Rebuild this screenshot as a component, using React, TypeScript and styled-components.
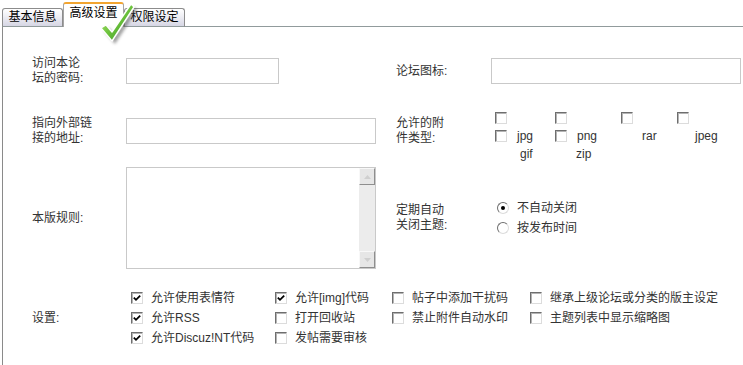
import styled, { createGlobalStyle } from "styled-components";

const GlobalStyle = createGlobalStyle`
  html, body {
    margin: 0;
    padding: 0;
    background: #fff;
    overflow: hidden;
  }
  body {
    font-family: "Liberation Sans", "Noto Sans CJK SC", sans-serif;
    font-size: 12px;
    color: #333;
  }
`;

const Page = styled.div`
  position: relative;
  width: 743px;
  height: 365px;
`;

const TabBar = styled.div`
  position: relative;
  z-index: 1;
  display: flex;
  align-items: flex-end;
  height: 27px;
  margin-bottom: -1px;
  padding-left: 2px;
`;

const Tab = styled.div<{ $active?: boolean }>`
  box-sizing: border-box;
  width: 61px;
  height: ${(p) => (p.$active ? 25 : 19)}px;
  border: 1px solid ${(p) => (p.$active ? "#a5a5a5" : "#8c8c8c")};
  border-top: ${(p) => (p.$active ? "2px solid #f2a531" : "1px solid #8c8c8c")};
  border-bottom: ${(p) => (p.$active ? "none" : "1px solid #919b9c")};
  border-radius: 3px 3px 0 0;
  background: ${(p) =>
    p.$active ? "#fff" : "linear-gradient(#ffffff 0%, #f0f0f5 40%, #d6d6e4 100%)"};
  color: #000;
  font-size: 12px;
  line-height: ${(p) => (p.$active ? 18 : 17)}px;
  text-align: center;
  white-space: nowrap;
`;

const TickMark = styled.svg`
  position: absolute;
  left: 96px;
  top: 0;
  z-index: 2;
`;

const Panel = styled.div`
  margin-left: 2px;
  height: 338px;
  border-top: 1px solid #919b9c;
  border-left: 1px solid #8a8a8a;
`;

const Form = styled.div`
  display: flex;
  flex-direction: column;
  padding: 20px 0 0 29px;
`;

const Row = styled.div<{ $h: number; $mt?: number }>`
  display: grid;
  grid-template-columns: 94px 270px 95px 1fr;
  align-items: center;
  height: ${(p) => p.$h}px;
  margin-top: ${(p) => p.$mt ?? 0}px;
`;

const Label = styled.div`
  line-height: 15px;
  color: #333;
`;

const TextInput = styled.input<{ $w: number }>`
  box-sizing: border-box;
  width: ${(p) => p.$w}px;
  height: 26px;
  margin: 0;
  border: 1px solid #c9c9c9;
  background: #fff;
  outline: none;
`;

const TypeGroup = styled.div`
  align-self: start;
  margin-top: 10px;
  padding-left: 4px;
  display: grid;
  grid-template-columns: 60px 66px 56px 1fr;
`;

const TypeCol = styled.div`
  display: flex;
  flex-direction: column;
`;

const TypeLine = styled.div`
  display: flex;
  align-items: center;
  height: 18px;
  line-height: 18px;
`;

const TypeName = styled.span<{ $indent?: number }>`
  margin-left: ${(p) => p.$indent ?? 0}px;
  color: #333;
`;

const Box = styled.span`
  box-sizing: border-box;
  flex: none;
  display: inline-flex;
  align-items: center;
  justify-content: center;
  width: 12px;
  height: 12px;
  border: 1px solid;
  border-color: #6e6e6e #dcdcdc #dcdcdc #6e6e6e;
  box-shadow: inset 1px 1px 0 #b4b4b4;
  background: #fff;
`;

const RadioDot = styled.span`
  box-sizing: border-box;
  flex: none;
  display: inline-flex;
  align-items: center;
  justify-content: center;
  width: 12px;
  height: 12px;
  border-radius: 50%;
  border: 1px solid;
  border-color: #6e6e6e #dcdcdc #dcdcdc #6e6e6e;
  background: #fff;

  &::after {
    content: "";
    display: ${(p: { $on?: boolean }) => (p.$on ? "block" : "none")};
    width: 4px;
    height: 4px;
    border-radius: 50%;
    background: #000;
  }
`;

const AreaBox = styled.div`
  box-sizing: border-box;
  display: flex;
  width: 250px;
  height: 102px;
  border: 1px solid #c9c9c9;
  background: #fff;
`;

const Area = styled.textarea`
  flex: 1;
  border: none;
  resize: none;
  outline: none;
  margin: 0;
  padding: 2px;
  overflow: hidden;
  background: #fff;
`;

const ScrollBar = styled.div`
  display: flex;
  flex-direction: column;
  width: 16px;
  background: #ececec;
`;

const ScrollBtn = styled.div`
  box-sizing: border-box;
  display: flex;
  align-items: center;
  justify-content: center;
  height: 17px;
  border: 1px solid;
  border-color: #f8f8f8 #8e8e8e #8e8e8e #f8f8f8;
  background: #e6e6e6;
`;

const ScrollTrack = styled.div`
  flex: 1;
`;

const RadioGroup = styled.div`
  display: flex;
  flex-direction: column;
  padding-left: 6px;
`;

const OptionLine = styled.label`
  display: flex;
  align-items: center;
  gap: 8px;
  height: 20px;
  line-height: 20px;
  color: #333;
  white-space: nowrap;
`;

const SettingsRow = styled.div`
  display: grid;
  grid-template-columns: 94px 1fr;
  align-items: center;
  height: 60px;
  margin-top: 19px;
`;

const SettingsGrid = styled.div`
  display: grid;
  grid-template-columns: 144px 117px 138px 1fr;
  grid-auto-rows: 20px;
  padding-left: 5px;
`;

function Check({ on }: { on?: boolean }) {
  return (
    <Box>
      {on && (
        <svg width="8" height="8" viewBox="0 0 8 8">
          <polyline
            points="0.8,3.6 3,5.8 7.2,1.6"
            fill="none"
            stroke="#000"
            strokeWidth="1.8"
          />
        </svg>
      )}
    </Box>
  );
}

function Arrow({ up }: { up?: boolean }) {
  return (
    <svg width="7" height="4" viewBox="0 0 7 4">
      <polygon
        points={up ? "3.5,0 7,4 0,4" : "0,0 7,0 3.5,4"}
        fill="#cfcfcf"
      />
    </svg>
  );
}

const settings: [string, boolean][] = [
  ["允许使用表情符", true],
  ["允许[img]代码", true],
  ["帖子中添加干扰码", false],
  ["继承上级论坛或分类的版主设定", false],
  ["允许RSS", true],
  ["打开回收站", false],
  ["禁止附件自动水印", false],
  ["主题列表中显示缩略图", false],
  ["允许Discuz!NT代码", true],
  ["发帖需要审核", false],
];

export default function App() {
  return (
    <Page>
      <GlobalStyle />
      <TabBar>
        <Tab>基本信息</Tab>
        <Tab $active>高级设置</Tab>
        <Tab>权限设定</Tab>
      </TabBar>
      <TickMark width="46" height="46" viewBox="0 0 46 46">
        <defs>
          <linearGradient id="tickFill" x1="0" y1="0" x2="1" y2="1">
            <stop offset="0" stopColor="#c8f08a" />
            <stop offset="0.5" stopColor="#6cc23c" />
            <stop offset="1" stopColor="#2f8a22" />
          </linearGradient>
          <filter id="tickShadow" x="-30%" y="-30%" width="160%" height="160%">
            <feGaussianBlur stdDeviation="1.6" />
          </filter>
        </defs>
        <polygon
          points="8,31 13,28 19,35 38,7 41,10 19,44"
          fill="#555"
          opacity="0.55"
          filter="url(#tickShadow)"
        />
        <polygon
          points="5,28 10,25 16,32 35,4 38,7 16,41"
          fill="url(#tickFill)"
          stroke="#fff"
          strokeWidth="1.4"
          strokeLinejoin="round"
        />
      </TickMark>
      <Panel>
        <Form>
          <Row $h={48}>
            <Label>
              访问本论
              <br />
              坛的密码:
            </Label>
            <TextInput $w={153} type="password" />
            <Label>论坛图标:</Label>
            <TextInput $w={250} type="text" />
          </Row>
          <Row $h={56} $mt={4}>
            <Label>
              指向外部链
              <br />
              接的地址:
            </Label>
            <TextInput $w={250} type="text" />
            <Label>
              允许的附
              <br />
              件类型:
            </Label>
            <TypeGroup>
              <TypeCol>
                <TypeLine>
                  <Check />
                </TypeLine>
                <TypeLine>
                  <Check />
                  <TypeName $indent={10}>jpg</TypeName>
                </TypeLine>
                <TypeLine>
                  <TypeName $indent={25}>gif</TypeName>
                </TypeLine>
              </TypeCol>
              <TypeCol>
                <TypeLine>
                  <Check />
                </TypeLine>
                <TypeLine>
                  <Check />
                  <TypeName $indent={10}>png</TypeName>
                </TypeLine>
                <TypeLine>
                  <TypeName $indent={21}>zip</TypeName>
                </TypeLine>
              </TypeCol>
              <TypeCol>
                <TypeLine>
                  <Check />
                </TypeLine>
                <TypeLine>
                  <TypeName $indent={21}>rar</TypeName>
                </TypeLine>
              </TypeCol>
              <TypeCol>
                <TypeLine>
                  <Check />
                </TypeLine>
                <TypeLine>
                  <TypeName $indent={18}>jpeg</TypeName>
                </TypeLine>
              </TypeCol>
            </TypeGroup>
          </Row>
          <Row $h={102} $mt={12}>
            <Label>本版规则:</Label>
            <AreaBox>
              <Area />
              <ScrollBar>
                <ScrollBtn>
                  <Arrow up />
                </ScrollBtn>
                <ScrollTrack />
                <ScrollBtn>
                  <Arrow />
                </ScrollBtn>
              </ScrollBar>
            </AreaBox>
            <Label>
              定期自动
              <br />
              关闭主题:
            </Label>
            <RadioGroup>
              <OptionLine>
                <RadioDot $on />
                不自动关闭
              </OptionLine>
              <OptionLine>
                <RadioDot />
                按发布时间
              </OptionLine>
            </RadioGroup>
          </Row>
          <SettingsRow>
            <Label>设置:</Label>
            <SettingsGrid>
              {settings.map(([text, on]) => (
                <OptionLine key={text}>
                  <Check on={on} />
                  {text}
                </OptionLine>
              ))}
            </SettingsGrid>
          </SettingsRow>
        </Form>
      </Panel>
    </Page>
  );
}
